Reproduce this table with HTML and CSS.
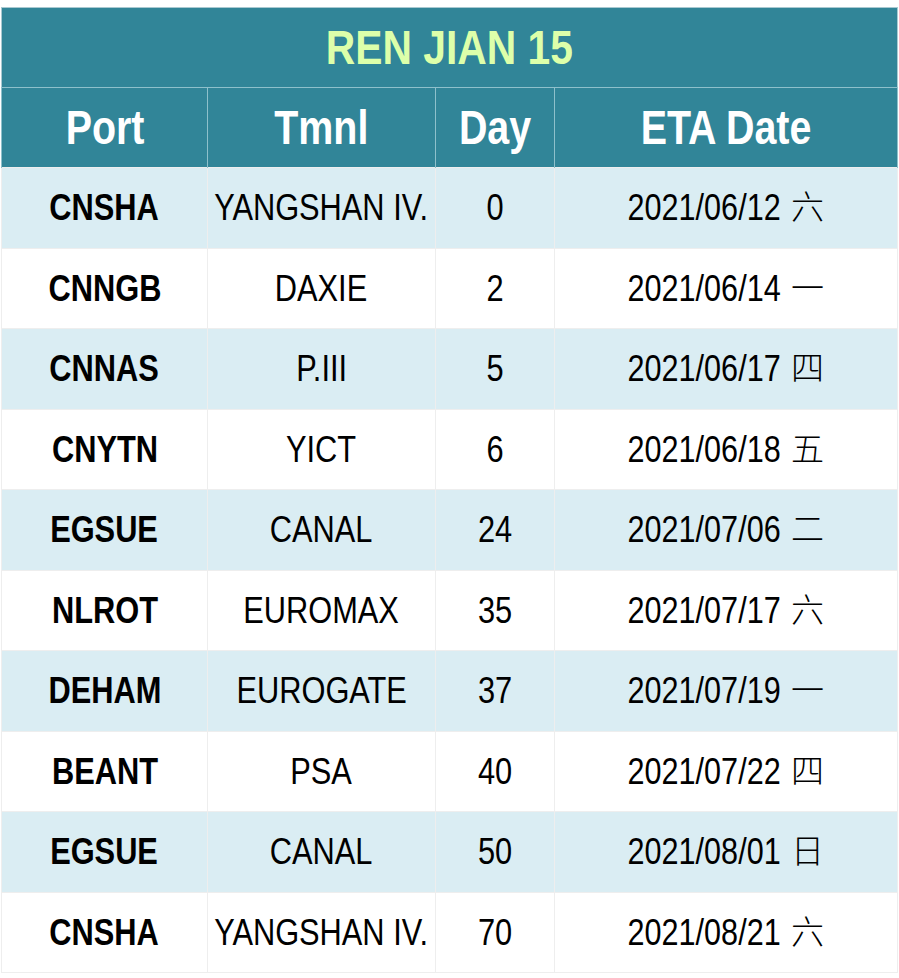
FILE: index.html
```html
<!DOCTYPE html>
<html>
<head>
<meta charset="utf-8">
<link rel="stylesheet" href="styles.css">
</head>
<body>
<table class="sched">
  <colgroup>
    <col class="c-port"><col class="c-tmnl"><col class="c-day"><col class="c-eta">
  </colgroup>
  <thead>
    <tr class="title-row"><th colspan="4"><span class="nt">REN JIAN 15</span></th></tr>
    <tr class="head-row"><th><span class="n">Port</span></th><th><span class="n">Tmnl</span></th><th><span class="n">Day</span></th><th><span class="n">ETA Date</span></th></tr>
  </thead>
  <tbody>
    <tr class="alt"><td class="port"><span class="n">CNSHA</span></td><td><span class="n">YANGSHAN IV.</span></td><td><span class="n">0</span></td><td><span class="n date">2021/06/12</span> <span class="cjk">六</span></td></tr>
    <tr><td class="port"><span class="n">CNNGB</span></td><td><span class="n">DAXIE</span></td><td><span class="n">2</span></td><td><span class="n date">2021/06/14</span> <span class="cjk">一</span></td></tr>
    <tr class="alt"><td class="port"><span class="n">CNNAS</span></td><td><span class="n">P.III</span></td><td><span class="n">5</span></td><td><span class="n date">2021/06/17</span> <span class="cjk">四</span></td></tr>
    <tr><td class="port"><span class="n">CNYTN</span></td><td><span class="n">YICT</span></td><td><span class="n">6</span></td><td><span class="n date">2021/06/18</span> <span class="cjk">五</span></td></tr>
    <tr class="alt"><td class="port"><span class="n">EGSUE</span></td><td><span class="n">CANAL</span></td><td><span class="n">24</span></td><td><span class="n date">2021/07/06</span> <span class="cjk">二</span></td></tr>
    <tr><td class="port"><span class="n">NLROT</span></td><td><span class="n">EUROMAX</span></td><td><span class="n">35</span></td><td><span class="n date">2021/07/17</span> <span class="cjk">六</span></td></tr>
    <tr class="alt"><td class="port"><span class="n">DEHAM</span></td><td><span class="n">EUROGATE</span></td><td><span class="n">37</span></td><td><span class="n date">2021/07/19</span> <span class="cjk">一</span></td></tr>
    <tr><td class="port"><span class="n">BEANT</span></td><td><span class="n">PSA</span></td><td><span class="n">40</span></td><td><span class="n date">2021/07/22</span> <span class="cjk">四</span></td></tr>
    <tr class="alt"><td class="port"><span class="n">EGSUE</span></td><td><span class="n">CANAL</span></td><td><span class="n">50</span></td><td><span class="n date">2021/08/01</span> <span class="cjk">日</span></td></tr>
    <tr><td class="port"><span class="n">CNSHA</span></td><td><span class="n">YANGSHAN IV.</span></td><td><span class="n">70</span></td><td><span class="n date">2021/08/21</span> <span class="cjk">六</span></td></tr>
  </tbody>
</table>
</body>
</html>
```

FILE: styles.css
```css
html, body {
  margin: 0;
  padding: 0;
  background: #ffffff;
}

.sched {
  margin: 7px 0 0 1px;
  width: 896px;
  border-collapse: collapse;
  table-layout: fixed;
  font-family: "Liberation Sans", Arial, sans-serif;
  color: #000;
}

.c-port { width: 206px; }
.c-tmnl { width: 228px; }
.c-day { width: 119px; }
.c-eta { width: 343px; }

.sched th, .sched td {
  padding: 0;
  text-align: center;
  vertical-align: middle;
  white-space: nowrap;
  overflow: hidden;
  line-height: 1.15;
}

.n, .nt {
  display: inline-block;
  white-space: nowrap;
  transform: scaleX(0.82);
  transform-origin: center;
  margin: 0 -30px;
}

.nt {
  transform: scaleX(0.85);
}

.title-row th {
  height: 79px;
  background: #318598;
  color: #ddffaa;
  font-weight: bold;
  font-size: 48px;
  border: 1px solid #a9c9d1;
  border-bottom: 1px solid #8ec0cb;
}

.head-row th {
  height: 79px;
  background: #318598;
  color: #ffffff;
  font-weight: bold;
  font-size: 48px;
  border-left: 1px solid #8ec0cb;
  border-right: 1px solid #8ec0cb;
}

.sched tbody td {
  height: 79.5px;
  font-size: 36px;
  border: 1px solid #eeeeee;
  background: #ffffff;
}

.sched tbody td .n {
  transform: scaleX(0.855);
}

.sched tbody tr.alt td {
  background: #daedf3;
}

.sched tbody td.port {
  font-weight: bold;
}

.sched tbody td .date {
  margin: 0 -13.5px;
  transform: scaleX(0.85);
}

.cjk {
  display: inline-block;
  font-family: "Noto Sans CJK TC", sans-serif;
  font-weight: 300;
  font-size: 33px;
  line-height: 1;
  vertical-align: 1px;
}
```
